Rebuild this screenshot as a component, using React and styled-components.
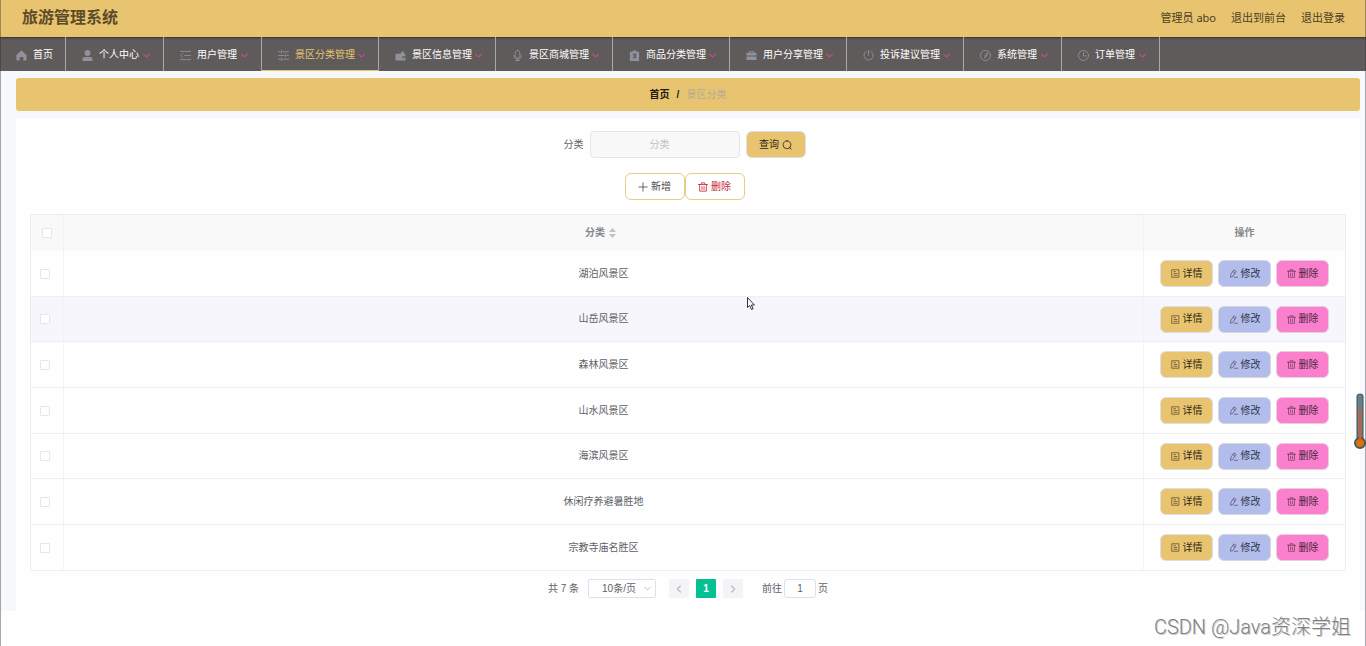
import React from "react";
import styled, { createGlobalStyle, css } from "styled-components";

const GlobalStyle = createGlobalStyle`
  *, *::before, *::after { box-sizing: border-box; }
  body {
    margin: 0;
    background: #fefefe;
    color: #606266;
    font-family: "Liberation Sans", "Noto Sans CJK SC", sans-serif;
    font-size: 10px;
    line-height: 14px;
  }
  button, input, select { font: inherit; color: inherit; margin: 0; }
  a { color: inherit; text-decoration: none; }
`;

const gold = "#e8c470";

const Page = styled.div`
  position: relative;
  min-height: 100vh;
  overflow: hidden;
  &::after {
    content: "";
    position: absolute;
    inset: 0;
    border: solid rgba(50, 50, 60, 0.42);
    border-width: 0 1px;
    pointer-events: none;
  }
`;

const Header = styled.header`
  display: flex;
  align-items: center;
  justify-content: space-between;
  height: 37px;
  padding: 0 21px 2px 22px;
  background: ${gold};
`;

const Brand = styled.h1`
  margin: 0;
  font-size: 16px;
  line-height: 20px;
  font-weight: 700;
  color: #5d4c2a;
`;

const Account = styled.div`
  display: flex;
  gap: 15px;
  font-family: "Noto Sans", "Noto Sans CJK SC", sans-serif;
  font-size: 11px;
  color: #4b3e23;
`;

const Nav = styled.nav`
  display: flex;
  height: 34px;
  background: #5e5b5a;
  box-shadow: inset 0 2px 2px -1px rgba(0, 0, 0, 0.45);
`;

const navWidths = { home: 66, short: 98, long: 117 };

const NavItem = styled.a`
  display: flex;
  flex: none;
  align-items: center;
  width: ${(p) => navWidths[p.$size]}px;
  padding: 2px 13px 0 16px;
  border-right: 1px solid #aaa8a8;
  color: ${(p) => (p.$active ? gold : "#fff")};
  white-space: nowrap;
  ${(p) => p.$active && css`box-shadow: inset 0 -1px 0 ${gold};`}
  > svg:first-child { margin-right: 6px; color: #8f929a; }
  > svg:nth-child(2) { margin-left: auto; color: #c94b8c; }
`;

const Svg = styled.svg`
  flex: none;
  width: ${(p) => p.$s}px;
  height: ${(p) => p.$s}px;
  fill: none;
  stroke: currentColor;
  stroke-width: ${(p) => p.$w || 2};
  stroke-linecap: round;
  stroke-linejoin: round;
`;

const solid = { fill: "currentColor", stroke: "none" };

const icons = {
  home: <path {...solid} d="M12 1 23 11v11a1 1 0 0 1-1 1h-6v-8H8v8H2a1 1 0 0 1-1-1V11z" />,
  user: <path {...solid} d="M12 0a6 6 0 1 1 0 13 6 6 0 0 1 0-13zM1 24v-5c0-2 2-4 5-4h12c3 0 5 2 5 4v5z" />,
  fold: <path d="M1 3h22M10 12h13M1 21h22M6 8l-4 4 4 4" />,
  sliders: <path d="M1 4h4M11 4h12M8 1v6M1 12h12M19 12h4M16 9v6M1 20h4M11 20h12M8 17v6" />,
  wallet: <path {...solid} d="M2 8h9l6-6 4 5-1 2h3v4h-6a3 3 0 0 0 0 5h6v5H1V9zM18 14.500h5v2h-5z" />,
  mic: <path d="M12 1c-3 0-5 2-5 5v6c0 3 2 5 5 5s5-2 5-5V6c0-3-2-5-5-5zM4 12c0 5 3 8 8 8s8-3 8-8M12 20v3M8 23h8" />,
  clip: <path {...solid} fillRule="evenodd" d="M8 1h8v3h6v20H2V4h6zM8 9l3 4-3 4 2 2 2.500-3 2.500 3 2-2-3-4 3-4-2-2-2.500 3L10 7z" />,
  bag: <path {...solid} fillRule="evenodd" d="M7 6V2h10v4h6v6H1V6zm2 0h6V4H9zM1 14h22v8H1z" />,
  power: <path d="M12 1v10M7 3a10 10 0 1 0 10 0" />,
  compass: <><circle cx="12" cy="12" r="11" /><path d="m17 7-3 7-4 3 2-6z" /></>,
  clock: <><circle cx="12" cy="12" r="11" /><path d="M12 5v8h6" /></>,
  down: <path d="m2 7 10 10L22 7" />,
  left: <path d="M16 3 7 12l9 9" />,
  right: <path d="m8 3 9 9-9 9" />,
  search: <path d="M12 2a9 9 0 1 1 0 19 9 9 0 0 1 0-19zM18 18l4 4" />,
  plus: <path d="M12 2v20M2 12h20" />,
  trash: <path d="M1 6h22M8 6V2h8v4M4 6v16h16V6M9.500 11v7M14.500 11v7" />,
  doc: <path d="M3 2h18v20H3zM8 7h4M8 12h8M8 17h8" />,
  edit: <path d="m14 3 5 3-9 14-6 2 1-7zM11 7l5 4M14 22h9" />,
};

const Icon = ({ name, size = 10, weight }) => (
  <Svg viewBox="0 0 24 24" $s={size} $w={weight} aria-hidden="true">{icons[name]}</Svg>
);

const Body = styled.main`
  padding: 7px 6px 0 16px;
  background: #f7f8fc;
`;

const Crumbs = styled.nav`
  display: flex;
  justify-content: center;
  align-items: center;
  gap: 7px;
  height: 33px;
  margin-bottom: 7px;
  border-radius: 3px;
  background: ${gold};
  color: #1d1a12;
  font-weight: 700;
`;

const Current = styled.span`
  color: #b3ac99;
  font-weight: 400;
`;

const Panel = styled.section`
  padding: 13px 14px;
  background: #fefefe;
`;

const FormRow = styled.form`
  display: flex;
  justify-content: center;
  align-items: center;
  gap: 6px;
  padding-right: 7px;
  margin-bottom: 15px;
`;

const SearchInput = styled.input`
  width: 150px;
  height: 27px;
  padding: 0 10px 0 0;
  border: 1px solid #e4e5ec;
  border-radius: 4px;
  background: #f8f8f8;
  text-align: center;
  outline: none;
  &::placeholder { color: #c0c2c8; opacity: 1; }
`;

const tones = {
  gold: css`background: ${gold}; border-color: #dcdfe6; color: #302813;`,
  blue: css`background: #b2bdeb; border-color: #d6d8e0; color: #34384b;`,
  pink: css`background: #fa80cd; border-color: #e5cfdf; color: #4b263d;`,
  plain: css`background: #fff; border-color: #e5cd8c; color: #4a4a4a;`,
  danger: css`background: #fff; border-color: #e5cd8c; color: #c9273c;`,
};

const Button = styled.button`
  display: inline-flex;
  justify-content: center;
  align-items: center;
  gap: 3px;
  width: ${(p) => (p.$small ? 53 : 60)}px;
  height: 27px;
  padding: 0;
  border: 1px solid;
  border-radius: 6px;
  white-space: nowrap;
  ${(p) => tones[p.$tone]}
`;

const Tools = styled.div`
  display: flex;
  justify-content: center;
  padding-right: 7px;
  margin-bottom: 14px;
`;

const Table = styled.table`
  width: 100%;
  table-layout: fixed;
  border-collapse: separate;
  border-spacing: 0;
  border: solid #ececf2;
  border-width: 1px 1px 0 1px;
`;

const Cell = styled.td`
  padding: 0;
  border-bottom: 1px solid #eeeef3;
  border-right: ${(p) => (p.$last ? 0 : 1)}px solid #f2f2f8;
  text-align: center;
  vertical-align: middle;
`;

const HeadCell = styled(Cell).attrs({ as: "th", scope: "col" })`
  height: 36px;
  background: #f9f9f9;
  border-bottom: 0;
  color: #85878c;
  font-weight: 700;
`;

const Row = styled.tr`
  height: 46px;
  background: ${(p) => (p.$hover ? "#f6f6fc" : "#fefefe")};
  &:nth-child(3n + 2) { height: 45px; }
`;

const CheckCol = styled.col`width: 33px;`;
const ActionCol = styled.col`width: 201px;`;

const Check = styled.input.attrs({ type: "checkbox" })`
  display: block;
  appearance: none;
  width: 10px;
  height: 10px;
  margin: 0 auto 0 9px;
  border: 1px solid #e6e6ec;
  border-radius: 1px;
  background: #fff;
  th & { margin-left: 11px; }
`;

const SortLabel = styled.span`
  display: inline-flex;
  align-items: center;
  gap: 4px;
  padding-right: 6px;
`;

const Caret = styled.svg`
  width: 7px;
  height: 10px;
  fill: #bfc1c8;
`;

const Actions = styled.div`
  display: flex;
  gap: 5px;
  padding-left: 16px;
`;

const Pager = styled.div`
  display: flex;
  justify-content: center;
  align-items: center;
  margin-top: 8px;
  height: 19px;
`;

const SelectWrap = styled.label`
  display: flex;
  align-items: center;
  position: relative;
  margin: 0 13px 0 9px;
  > svg { position: absolute; right: 5px; color: #b4b8c0; pointer-events: none; }
`;

const Select = styled.select`
  appearance: none;
  width: 68px;
  height: 19px;
  padding: 0 0 0 13px;
  border: 1px solid #dfe1e8;
  border-radius: 2px;
  background: #fff;
`;

const PageButton = styled.button`
  display: flex;
  align-items: center;
  justify-content: center;
  width: 20px;
  height: 19px;
  margin-right: 7px;
  padding: 0;
  border: 0;
  border-radius: 1px;
  background: ${(p) => (p.$current ? "#05c191" : "#f4f4f7")};
  color: ${(p) => (p.$current ? "#fff" : "#b9bcc4")};
  font-weight: 700;
`;

const Jump = styled.label`
  display: flex;
  align-items: center;
  gap: 2px;
  margin-left: 12px;
`;

const JumpInput = styled.input`
  width: 32px;
  height: 19px;
  padding: 0;
  border: 1px solid #dfe1e8;
  border-radius: 3px;
  background: #fff;
  text-align: center;
`;

const Watermark = styled.div`
  position: absolute;
  right: 15px;
  bottom: 5px;
  font-family: Roboto, "Noto Sans CJK SC", sans-serif;
  font-size: 20px;
  line-height: 28px;
  font-weight: 300;
  color: #808080;
  text-shadow: 1px 1px 0 #d0d0d0;
`;

const Thermometer = styled.svg`
  position: absolute;
  right: 0;
  top: 393px;
  width: 12px;
  height: 57px;
`;

const Cursor = styled.svg`
  position: absolute;
  left: 747px;
  top: 297px;
  width: 8px;
  height: 13px;
`;

const menu = [
  ["home", "首页", "home"],
  ["user", "个人中心", "short"],
  ["fold", "用户管理", "short"],
  ["sliders", "景区分类管理", "long"],
  ["wallet", "景区信息管理", "long"],
  ["mic", "景区商城管理", "long"],
  ["clip", "商品分类管理", "long"],
  ["bag", "用户分享管理", "long"],
  ["power", "投诉建议管理", "long"],
  ["compass", "系统管理", "short"],
  ["clock", "订单管理", "short"],
];

const categories = ["湖泊风景区", "山岳风景区", "森林风景区", "山水风景区", "海滨风景区", "休闲疗养避暑胜地", "宗教寺庙名胜区"];

export default function App() {
  return (
    <Page>
      <GlobalStyle />
      <Header>
        <Brand>旅游管理系统</Brand>
        <Account>
          <span>管理员 abo</span>
          <a href="#front">退出到前台</a>
          <a href="#logout">退出登录</a>
        </Account>
      </Header>
      <Nav>
        {menu.map(([icon, label, size]) => (
          <NavItem key={label} href={"#" + icon} $size={size} $active={icon === "sliders"}>
            <Icon name={icon} size={11} />
            {label}
            {size !== "home" && <Icon name="down" size={7} weight={4} />}
          </NavItem>
        ))}
      </Nav>
      <Body>
        <Crumbs>
          <a href="#home">首页</a>
          <span>/</span>
          <Current>景区分类</Current>
        </Crumbs>
        <Panel>
          <FormRow onSubmit={(e) => e.preventDefault()}>
            <label htmlFor="category">分类</label>
            <SearchInput id="category" placeholder="分类" />
            <Button type="submit" $tone="gold">查询<Icon name="search" /></Button>
          </FormRow>
          <Tools>
            <Button type="button" $tone="plain"><Icon name="plus" />新增</Button>
            <Button type="button" $tone="danger"><Icon name="trash" />删除</Button>
          </Tools>
          <Table>
            <colgroup><CheckCol /><col /><ActionCol /></colgroup>
            <thead>
              <tr>
                <HeadCell><Check aria-label="全选" /></HeadCell>
                <HeadCell>
                  <SortLabel>
                    分类
                    <Caret viewBox="0 0 7 10" aria-hidden="true"><path d="M3.500 0 7 4H0zM0 6h7L3.500 10z" /></Caret>
                  </SortLabel>
                </HeadCell>
                <HeadCell $last>操作</HeadCell>
              </tr>
            </thead>
            <tbody>
              {categories.map((name, i) => (
                <Row key={name} $hover={i === 1}>
                  <Cell><Check aria-label={name} /></Cell>
                  <Cell>{name}</Cell>
                  <Cell $last>
                    <Actions>
                      <Button type="button" $small $tone="gold"><Icon name="doc" size={9} weight={1.5} />详情</Button>
                      <Button type="button" $small $tone="blue"><Icon name="edit" size={9} weight={1.5} />修改</Button>
                      <Button type="button" $small $tone="pink"><Icon name="trash" size={9} weight={1.5} />删除</Button>
                    </Actions>
                  </Cell>
                </Row>
              ))}
            </tbody>
          </Table>
          <Pager>
            <span>共 7 条</span>
            <SelectWrap>
              <Select aria-label="每页条数"><option>10条/页</option></Select>
              <Icon name="down" size={7} weight={3} />
            </SelectWrap>
            <PageButton type="button" aria-label="上一页"><Icon name="left" size={8} weight={4} /></PageButton>
            <PageButton type="button" $current>1</PageButton>
            <PageButton type="button" aria-label="下一页"><Icon name="right" size={8} weight={4} /></PageButton>
            <Jump>前往<JumpInput defaultValue="1" />页</Jump>
          </Pager>
        </Panel>
      </Body>
      <Cursor viewBox="0 0 8 13" aria-hidden="true">
        <path d="M.500.500v10l2.300-2 1.700 4 1.600-.700-1.700-3.800h3z" fill="#fff" stroke="#333" strokeWidth="1" />
      </Cursor>
      <Thermometer viewBox="0 0 12 57" aria-hidden="true">
        <path d="M3 46V3q0-2 3-2t3 2v43" fill="#697f8b" stroke="#3c5059" strokeWidth="1" />
        <circle cx="6" cy="50" r="5" fill="#df7109" stroke="#3f5d68" strokeWidth="2" />
        <path d="M6 16v32" stroke="#e2561f" strokeWidth="2" />
      </Thermometer>
      <Watermark>CSDN @Java资深学姐</Watermark>
    </Page>
  );
}
